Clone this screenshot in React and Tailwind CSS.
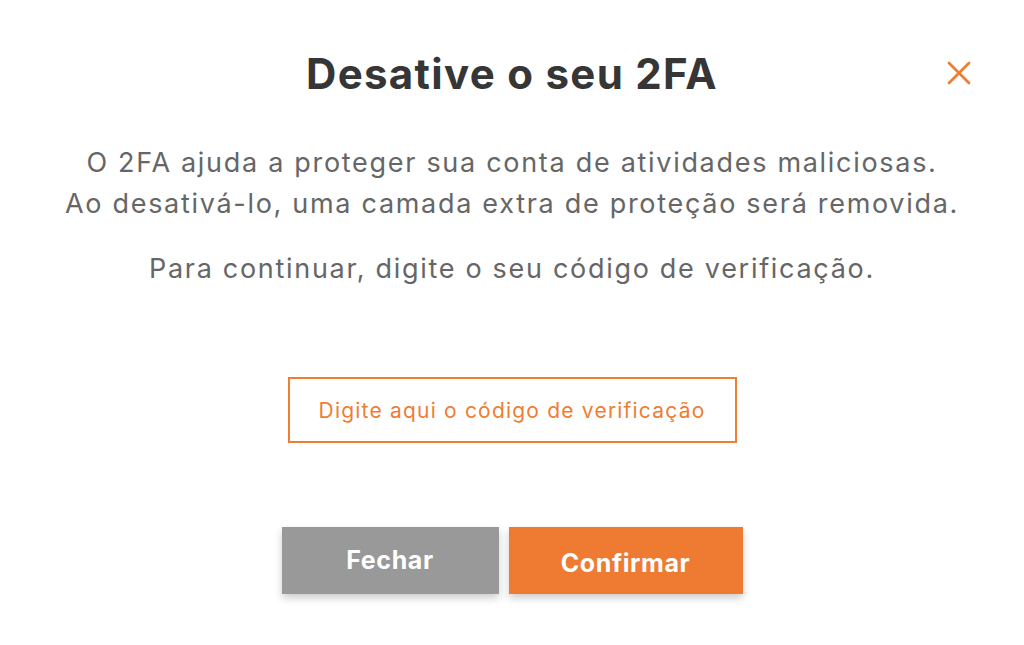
export default function App() {
  return (
    <div className="relative flex h-[645px] w-full flex-col items-center bg-white font-['Inter',sans-serif]">
      <button type="button" className="absolute right-[53px] top-[61px] text-[#ef7d33]">
        <svg width="24" height="24" viewBox="0 0 24 24" fill="none" stroke="currentColor" strokeWidth="2.8" strokeLinecap="round">
          <path d="M2 2 L22 22 M22 2 L2 22" />
        </svg>
      </button>

      <h1 className="mt-[50px] text-[42px] font-bold leading-[48px] tracking-[1.3px] text-[#363636]">Desative o seu 2FA</h1>

      <p className="mt-[44px] text-center text-[27px] leading-[41px] tracking-[1.7px] text-[#666]">
        O 2FA ajuda a proteger sua conta de atividades maliciosas.
        <br />
        Ao desativá-lo, uma camada extra de proteção será removida.
      </p>
      <p className="mt-[24px] text-center text-[27px] leading-[41px] tracking-[1.7px] text-[#666]">
        Para continuar, digite o seu código de verificação.
      </p>

      <input
        type="text"
        placeholder="Digite aqui o código de verificação"
        className="mt-[88px] h-[66px] w-[449px] border-2 border-[#ef7d33] text-center text-[21px] tracking-[1.2px] text-[#ef7d33] outline-none placeholder:text-[#ef7d33]"
      />

      <div className="mt-[84px] flex gap-[10px]">
        <button type="button" className="h-[67px] w-[217px] bg-[#999] text-[25px] font-bold tracking-[0.6px] text-white shadow-[0_4px_8px_rgba(0,0,0,0.2)]">
          Fechar
        </button>
        <button type="button" className="h-[67px] w-[234px] bg-[#ef7b32] pt-[7px] text-[25px] font-bold tracking-[0.6px] text-white shadow-[0_4px_8px_rgba(0,0,0,0.2)]">
          Confirmar
        </button>
      </div>
    </div>
  )
}
